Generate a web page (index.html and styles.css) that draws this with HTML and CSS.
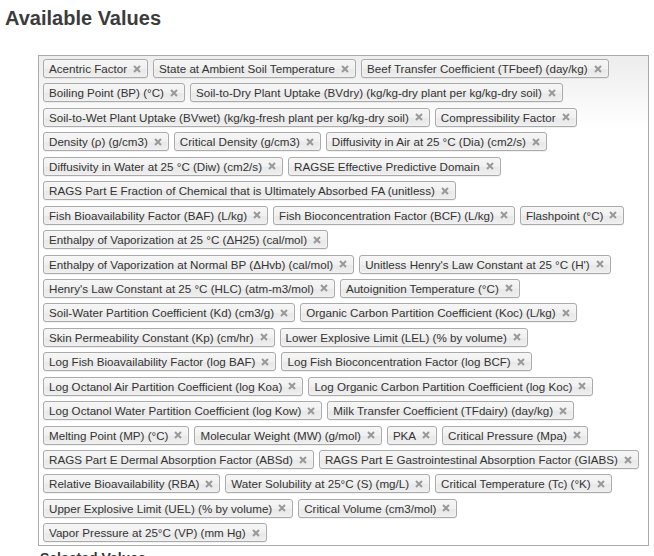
FILE: index.html
```html
<!DOCTYPE html>
<html>
<head>
<meta charset="utf-8">
<link rel="stylesheet" href="styles.css">
</head>
<body>
<h3 class="title">Available Values</h3>
<div class="choices">
  <span class="chip"><span>Acentric Factor</span><svg class="x" viewBox="0 0 8 8"><path d="M1 1L7 7M7 1L1 7"/></svg></span>
  <span class="chip"><span>State at Ambient Soil Temperature</span><svg class="x" viewBox="0 0 8 8"><path d="M1 1L7 7M7 1L1 7"/></svg></span>
  <span class="chip"><span>Beef Transfer Coefficient (TFbeef) (day/kg)</span><svg class="x" viewBox="0 0 8 8"><path d="M1 1L7 7M7 1L1 7"/></svg></span>
  <span class="chip"><span>Boiling Point (BP) (°C)</span><svg class="x" viewBox="0 0 8 8"><path d="M1 1L7 7M7 1L1 7"/></svg></span>
  <span class="chip"><span>Soil-to-Dry Plant Uptake (BVdry) (kg/kg-dry plant per kg/kg-dry soil)</span><svg class="x" viewBox="0 0 8 8"><path d="M1 1L7 7M7 1L1 7"/></svg></span>
  <span class="chip"><span>Soil-to-Wet Plant Uptake (BVwet) (kg/kg-fresh plant per kg/kg-dry soil)</span><svg class="x" viewBox="0 0 8 8"><path d="M1 1L7 7M7 1L1 7"/></svg></span>
  <span class="chip"><span>Compressibility Factor</span><svg class="x" viewBox="0 0 8 8"><path d="M1 1L7 7M7 1L1 7"/></svg></span>
  <span class="chip"><span>Density (ρ) (g/cm3)</span><svg class="x" viewBox="0 0 8 8"><path d="M1 1L7 7M7 1L1 7"/></svg></span>
  <span class="chip"><span>Critical Density (g/cm3)</span><svg class="x" viewBox="0 0 8 8"><path d="M1 1L7 7M7 1L1 7"/></svg></span>
  <span class="chip"><span>Diffusivity in Air at 25 °C (Dia) (cm2/s)</span><svg class="x" viewBox="0 0 8 8"><path d="M1 1L7 7M7 1L1 7"/></svg></span>
  <span class="chip"><span>Diffusivity in Water at 25 °C (Diw) (cm2/s)</span><svg class="x" viewBox="0 0 8 8"><path d="M1 1L7 7M7 1L1 7"/></svg></span>
  <span class="chip"><span>RAGSE Effective Predictive Domain</span><svg class="x" viewBox="0 0 8 8"><path d="M1 1L7 7M7 1L1 7"/></svg></span>
  <span class="chip"><span>RAGS Part E Fraction of Chemical that is Ultimately Absorbed FA (unitless)</span><svg class="x" viewBox="0 0 8 8"><path d="M1 1L7 7M7 1L1 7"/></svg></span>
  <span class="chip"><span>Fish Bioavailability Factor (BAF) (L/kg)</span><svg class="x" viewBox="0 0 8 8"><path d="M1 1L7 7M7 1L1 7"/></svg></span>
  <span class="chip"><span>Fish Bioconcentration Factor (BCF) (L/kg)</span><svg class="x" viewBox="0 0 8 8"><path d="M1 1L7 7M7 1L1 7"/></svg></span>
  <span class="chip"><span>Flashpoint (°C)</span><svg class="x" viewBox="0 0 8 8"><path d="M1 1L7 7M7 1L1 7"/></svg></span>
  <span class="chip"><span>Enthalpy of Vaporization at 25 °C (ΔH25) (cal/mol)</span><svg class="x" viewBox="0 0 8 8"><path d="M1 1L7 7M7 1L1 7"/></svg></span>
  <span class="chip"><span>Enthalpy of Vaporization at Normal BP (ΔHvb) (cal/mol)</span><svg class="x" viewBox="0 0 8 8"><path d="M1 1L7 7M7 1L1 7"/></svg></span>
  <span class="chip"><span>Unitless Henry's Law Constant at 25 °C (H')</span><svg class="x" viewBox="0 0 8 8"><path d="M1 1L7 7M7 1L1 7"/></svg></span>
  <span class="chip"><span>Henry's Law Constant at 25 °C (HLC) (atm-m3/mol)</span><svg class="x" viewBox="0 0 8 8"><path d="M1 1L7 7M7 1L1 7"/></svg></span>
  <span class="chip"><span>Autoignition Temperature (°C)</span><svg class="x" viewBox="0 0 8 8"><path d="M1 1L7 7M7 1L1 7"/></svg></span>
  <span class="chip"><span>Soil-Water Partition Coefficient (Kd) (cm3/g)</span><svg class="x" viewBox="0 0 8 8"><path d="M1 1L7 7M7 1L1 7"/></svg></span>
  <span class="chip"><span>Organic Carbon Partition Coefficient (Koc) (L/kg)</span><svg class="x" viewBox="0 0 8 8"><path d="M1 1L7 7M7 1L1 7"/></svg></span>
  <span class="chip"><span>Skin Permeability Constant (Kp) (cm/hr)</span><svg class="x" viewBox="0 0 8 8"><path d="M1 1L7 7M7 1L1 7"/></svg></span>
  <span class="chip"><span>Lower Explosive Limit (LEL) (% by volume)</span><svg class="x" viewBox="0 0 8 8"><path d="M1 1L7 7M7 1L1 7"/></svg></span>
  <span class="chip"><span>Log Fish Bioavailability Factor (log BAF)</span><svg class="x" viewBox="0 0 8 8"><path d="M1 1L7 7M7 1L1 7"/></svg></span>
  <span class="chip"><span>Log Fish Bioconcentration Factor (log BCF)</span><svg class="x" viewBox="0 0 8 8"><path d="M1 1L7 7M7 1L1 7"/></svg></span>
  <span class="chip"><span>Log Octanol Air Partition Coefficient (log Koa)</span><svg class="x" viewBox="0 0 8 8"><path d="M1 1L7 7M7 1L1 7"/></svg></span>
  <span class="chip"><span>Log Organic Carbon Partition Coefficient (log Koc)</span><svg class="x" viewBox="0 0 8 8"><path d="M1 1L7 7M7 1L1 7"/></svg></span>
  <span class="chip"><span>Log Octanol Water Partition Coefficient (log Kow)</span><svg class="x" viewBox="0 0 8 8"><path d="M1 1L7 7M7 1L1 7"/></svg></span>
  <span class="chip"><span>Milk Transfer Coefficient (TFdairy) (day/kg)</span><svg class="x" viewBox="0 0 8 8"><path d="M1 1L7 7M7 1L1 7"/></svg></span>
  <span class="chip"><span>Melting Point (MP) (°C)</span><svg class="x" viewBox="0 0 8 8"><path d="M1 1L7 7M7 1L1 7"/></svg></span>
  <span class="chip"><span>Molecular Weight (MW) (g/mol)</span><svg class="x" viewBox="0 0 8 8"><path d="M1 1L7 7M7 1L1 7"/></svg></span>
  <span class="chip"><span>PKA</span><svg class="x" viewBox="0 0 8 8"><path d="M1 1L7 7M7 1L1 7"/></svg></span>
  <span class="chip"><span>Critical Pressure (Mpa)</span><svg class="x" viewBox="0 0 8 8"><path d="M1 1L7 7M7 1L1 7"/></svg></span>
  <span class="chip"><span>RAGS Part E Dermal Absorption Factor (ABSd)</span><svg class="x" viewBox="0 0 8 8"><path d="M1 1L7 7M7 1L1 7"/></svg></span>
  <span class="chip"><span>RAGS Part E Gastrointestinal Absorption Factor (GIABS)</span><svg class="x" viewBox="0 0 8 8"><path d="M1 1L7 7M7 1L1 7"/></svg></span>
  <span class="chip"><span>Relative Bioavailability (RBA)</span><svg class="x" viewBox="0 0 8 8"><path d="M1 1L7 7M7 1L1 7"/></svg></span>
  <span class="chip"><span>Water Solubility at 25°C (S) (mg/L)</span><svg class="x" viewBox="0 0 8 8"><path d="M1 1L7 7M7 1L1 7"/></svg></span>
  <span class="chip"><span>Critical Temperature (Tc) (°K)</span><svg class="x" viewBox="0 0 8 8"><path d="M1 1L7 7M7 1L1 7"/></svg></span>
  <span class="chip"><span>Upper Explosive Limit (UEL) (% by volume)</span><svg class="x" viewBox="0 0 8 8"><path d="M1 1L7 7M7 1L1 7"/></svg></span>
  <span class="chip"><span>Critical Volume (cm3/mol)</span><svg class="x" viewBox="0 0 8 8"><path d="M1 1L7 7M7 1L1 7"/></svg></span>
  <span class="chip"><span>Vapor Pressure at 25°C (VP) (mm Hg)</span><svg class="x" viewBox="0 0 8 8"><path d="M1 1L7 7M7 1L1 7"/></svg></span>
</div>
<h4 class="subtitle">Selected Values</h4>
</body>
</html>
```
FILE: styles.css
```css
html, body {
  margin: 0;
  padding: 0;
  background: #fff;
}
body {
  font-family: "Liberation Sans", Arial, sans-serif;
  color: #333;
  padding-left: 5px;
}
.title {
  margin: 7px 0 0 0;
  font-size: 20px;
  line-height: 22px;
  font-weight: bold;
  color: #3c3c3c;
}
.choices {
  margin: 26px 0 0 33px;
  width: 597px;
  border: 1px solid #aaa;
  padding: 3px 8px 3px 4px;
  background-color: #fff;
  background-image: linear-gradient(to bottom, #eee 1%, #fff 15%);
  display: flex;
  flex-wrap: wrap;
  align-content: flex-start;
  column-gap: 5px;
  row-gap: 5.45px;
}
.chip {
  display: flex;
  align-items: center;
  gap: 6px;
  height: 17px;
  padding: 0 6px 0 5px;
  border: 1px solid #aaa;
  border-radius: 3px;
  background-color: #e4e4e4;
  background-image: linear-gradient(to bottom, #f4f4f4 20%, #f0f0f0 50%, #e8e8e8 52%, #eee 100%);
  box-shadow: inset 0 0 2px #fff, 0 1px 0 rgba(0,0,0,0.05);
  font-size: 11.62px;
  line-height: 13px;
  color: #333;
  white-space: nowrap;
}
.x {
  width: 8px;
  height: 8px;
  flex: none;
}
.x path {
  stroke: #999;
  stroke-width: 2;
  fill: none;
}
.subtitle {
  margin: 4px 0 0 35px;
  font-size: 14px;
  line-height: 16px;
  font-weight: bold;
  color: #333;
}
```
